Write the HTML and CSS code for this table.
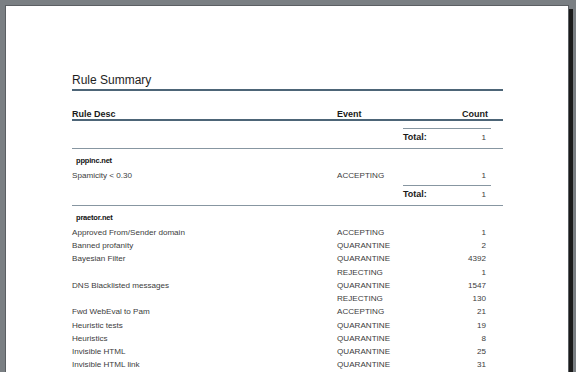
FILE: index.html
```html
<!DOCTYPE html>
<html>
<head>
<meta charset="utf-8">
<link rel="stylesheet" href="styles.css">
</head>
<body>
<div class="page">
  <div class="report">
    <h1 class="title">Rule Summary</h1>
    <div class="cols head">
      <span>Rule Desc</span>
      <span>Event</span>
      <span class="num">Count</span>
    </div>
    <section class="group">
      <div class="total"><span>Total:</span><span class="num">1</span></div>
    </section>
    <section class="group">
      <div class="domain">pppinc.net</div>
      <div class="cols row"><span>Spamicity &lt; 0.30</span><span>ACCEPTING</span><span class="num">1</span></div>
      <div class="total"><span>Total:</span><span class="num">1</span></div>
    </section>
    <section class="group">
      <div class="domain">praetor.net</div>
      <div class="cols row"><span>Approved From/Sender domain</span><span>ACCEPTING</span><span class="num">1</span></div>
      <div class="cols row"><span>Banned profanity</span><span>QUARANTINE</span><span class="num">2</span></div>
      <div class="cols row"><span>Bayesian Filter</span><span>QUARANTINE</span><span class="num">4392</span></div>
      <div class="cols row"><span></span><span>REJECTING</span><span class="num">1</span></div>
      <div class="cols row"><span>DNS Blacklisted messages</span><span>QUARANTINE</span><span class="num">1547</span></div>
      <div class="cols row"><span></span><span>REJECTING</span><span class="num">130</span></div>
      <div class="cols row"><span>Fwd WebEval to Pam</span><span>ACCEPTING</span><span class="num">21</span></div>
      <div class="cols row"><span>Heuristic tests</span><span>QUARANTINE</span><span class="num">19</span></div>
      <div class="cols row"><span>Heuristics</span><span>QUARANTINE</span><span class="num">8</span></div>
      <div class="cols row"><span>Invisible HTML</span><span>QUARANTINE</span><span class="num">25</span></div>
      <div class="cols row"><span>Invisible HTML link</span><span>QUARANTINE</span><span class="num">31</span></div>
    </section>
  </div>
</div>
</body>
</html>
```
FILE: styles.css
```css
html, body {
  margin: 0;
  padding: 0;
  height: 100%;
  overflow: hidden;
}
body {
  background: #7a7f83;
  font-family: "Liberation Sans", Arial, sans-serif;
  color: #3a3a3a;
}
.page {
  margin: 5px 0 0 5px;
  width: 562px;
  height: 420px;
  background: #ffffff;
  border: 1px solid #5b5f63;
  box-shadow: 4px 4px 0 #1b1b1b;
}
.report {
  padding: 67px 65px 0 66px;
}
.title {
  margin: 0;
  padding: 0 0 2px 0;
  font-size: 12px;
  line-height: 14px;
  font-weight: normal;
  color: #1e1e1e;
  border-bottom: 2px solid #4d6577;
}
.cols {
  display: grid;
  grid-template-columns: 265px 66px 1fr;
}
.num {
  text-align: right;
}
.head {
  padding-top: 18px;
  font-size: 9px;
  line-height: 10px;
  font-weight: bold;
  color: #1a1a1a;
  border-bottom: 2px solid #4d6577;
}
.head .num {
  padding-right: 15px;
}
.group {
  border-bottom: 1px solid #8796a1;
}
.head + .group .total {
  margin-top: 7px;
}
.domain {
  padding: 5.5px 0 3.4px 4px;
  font-size: 7.5px;
  letter-spacing: -0.2px;
  line-height: 11px;
  font-weight: bold;
  color: #111;
}
.row {
  font-size: 8.1px;
  line-height: 13.25px;
  color: #3c3c3c;
}
.row .num {
  padding-right: 17px;
}
.total {
  margin: 2.9px 0 0 331px;
  width: 88px;
  display: flex;
  justify-content: space-between;
  border-top: 1px solid #8796a1;
  padding: 3px 0 5px 0;
  line-height: 11px;
}
.total span:first-child {
  font-size: 9px;
  font-weight: bold;
  color: #1a1a1a;
}
.total .num {
  font-size: 8.1px;
  color: #3c3c3c;
  padding-right: 5px;
}
```
